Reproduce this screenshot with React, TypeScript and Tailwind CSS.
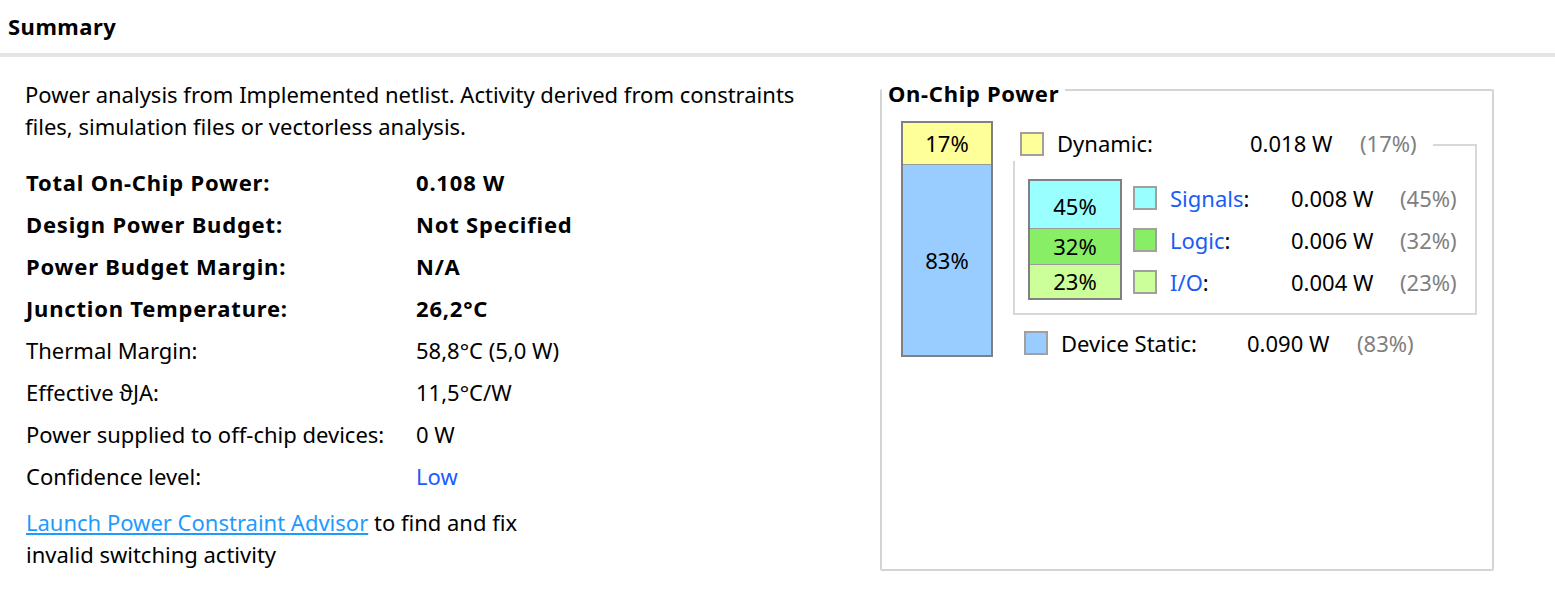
import React from 'react';

const rows: { label: string; value: string; bold?: boolean; link?: boolean }[] = [
  { label: 'Total On-Chip Power:', value: '0.108 W', bold: true },
  { label: 'Design Power Budget:', value: 'Not Specified', bold: true },
  { label: 'Power Budget Margin:', value: 'N/A', bold: true },
  { label: 'Junction Temperature:', value: '26,2°C', bold: true },
  { label: 'Thermal Margin:', value: '58,8°C (5,0 W)' },
  { label: 'Effective ϑJA:', value: '11,5°C/W' },
  { label: 'Power supplied to off-chip devices:', value: '0 W' },
  { label: 'Confidence level:', value: 'Low', link: true },
];

const dynamicRows = [
  { label: 'Signals', value: '0.008 W', pct: '(45%)', swatch: 'bg-[#99ffff]' },
  { label: 'Logic', value: '0.006 W', pct: '(32%)', swatch: 'bg-[#88ee66]' },
  { label: 'I/O', value: '0.004 W', pct: '(23%)', swatch: 'bg-[#ccff99]' },
];

const Swatch = ({ color }: { color: string }) => (
  <span className={`block w-[24px] h-[24px] border-2 border-[#a0a0a0] shrink-0 ${color}`} />
);

const OnChipPower = () => (
  <div className="relative w-[614px] h-[482px] border-2 border-[#d4d4d4] rounded-[2px]">
    <div className="absolute left-[0px] top-[-13px] bg-white px-[6px] text-[22px] font-bold tracking-[0.7px] leading-[30px] whitespace-nowrap">
      On-Chip Power
    </div>

    <div className="flex pl-[19px] pt-[30px]">
      {/* total bar */}
      <div className="w-[92px] h-[236px] border-2 border-[#808080] flex flex-col text-[22px]">
        <div className="h-[42px] bg-[#ffff99] border-b border-[#9a9a9a] flex items-center justify-center">17%</div>
        <div className="flex-1 bg-[#99ccff] flex items-center justify-center">83%</div>
      </div>

      <div className="ml-[20px] flex flex-col">
        {/* dynamic group */}
        <div className="relative mt-[23px] w-[464px] h-[171px] border-2 border-[#d8d8d8]">
          <div className="absolute left-[-4px] top-[-20px] w-[422px] h-[35px] bg-white flex items-center pl-[9px] text-[22px] whitespace-nowrap">
            <Swatch color="bg-[#ffff99]" />
            <span className="ml-[13px] w-[193px]">Dynamic:</span>
            <span className="w-[110px]">0.018 W</span>
            <span className="text-[#808080]">(17%)</span>
          </div>

          <div className="flex pl-[13px] pt-[31px]">
            <div className="mt-[2px] w-[94px] h-[121px] border-2 border-[#808080] flex flex-col text-[22px]">
              <div className="h-[51px] bg-[#99ffff] border-b border-[#9a9a9a] flex items-center justify-center pt-[4px]">
                45%
              </div>
              <div className="h-[39px] bg-[#88ee66] border-b border-[#9a9a9a] flex items-center justify-center">
                32%
              </div>
              <div className="flex-1 bg-[#ccff99] flex items-center justify-center">23%</div>
            </div>

            <div className="ml-[11px] flex flex-col">
              {dynamicRows.map((r) => (
                <div key={r.label} className="h-[42px] flex items-center text-[22px] whitespace-nowrap">
                  <Swatch color={r.swatch} />
                  <span className="ml-[13px] w-[121px]">
                    <span className="text-[#1a5cf5]">{r.label}</span>:
                  </span>
                  <span className="w-[109px]">{r.value}</span>
                  <span className="text-[#808080]">{r.pct}</span>
                </div>
              ))}
            </div>
          </div>
        </div>

        {/* static */}
        <div className="mt-[7px] h-[42px] flex items-center pl-[11px] text-[22px] whitespace-nowrap">
          <Swatch color="bg-[#99ccff]" />
          <span className="ml-[13px] w-[186px]">Device Static:</span>
          <span className="w-[110px]">0.090 W</span>
          <span className="text-[#808080]">(83%)</span>
        </div>
      </div>
    </div>
  </div>
);

export default function App() {
  return (
    <div className="w-[1555px] h-[607px] bg-white text-black overflow-hidden font-['Noto_Sans',sans-serif]">
      <div className="h-[53px] flex items-center px-[8px]">
        <h1 className="text-[22px] font-bold tracking-[0.5px]">Summary</h1>
      </div>
      <div className="h-[4px] bg-[#e5e5e5]" />

      <div className="flex">
        <div className="w-[880px] pl-[25px] pt-[21px] text-[22px]">
          <p className="leading-[32px] w-[805px]">
            Power analysis from Implemented netlist. Activity derived from constraints files, simulation files or
            vectorless analysis.
          </p>

          <div className="mt-[19px] pl-[1px]">
            {rows.map((r) => (
              <div
                key={r.label}
                className={`h-[42px] flex items-center whitespace-nowrap ${r.bold ? 'font-bold tracking-[0.8px]' : ''}`}
              >
                <span className="w-[390px]">{r.label}</span>
                <span className={r.link ? 'text-[#1a5cff]' : ''}>{r.value}</span>
              </div>
            ))}
          </div>

          <p className="mt-[9px] pl-[1px] leading-[32px] w-[535px]">
            <a href="#" className="text-[#1e9bff] underline underline-offset-[2px]">
              Launch Power Constraint Advisor
            </a>{' '}
            to find and fix invalid switching activity
          </p>
        </div>

        <div className="mt-[32px]">
          <OnChipPower />
        </div>
      </div>
    </div>
  );
}
